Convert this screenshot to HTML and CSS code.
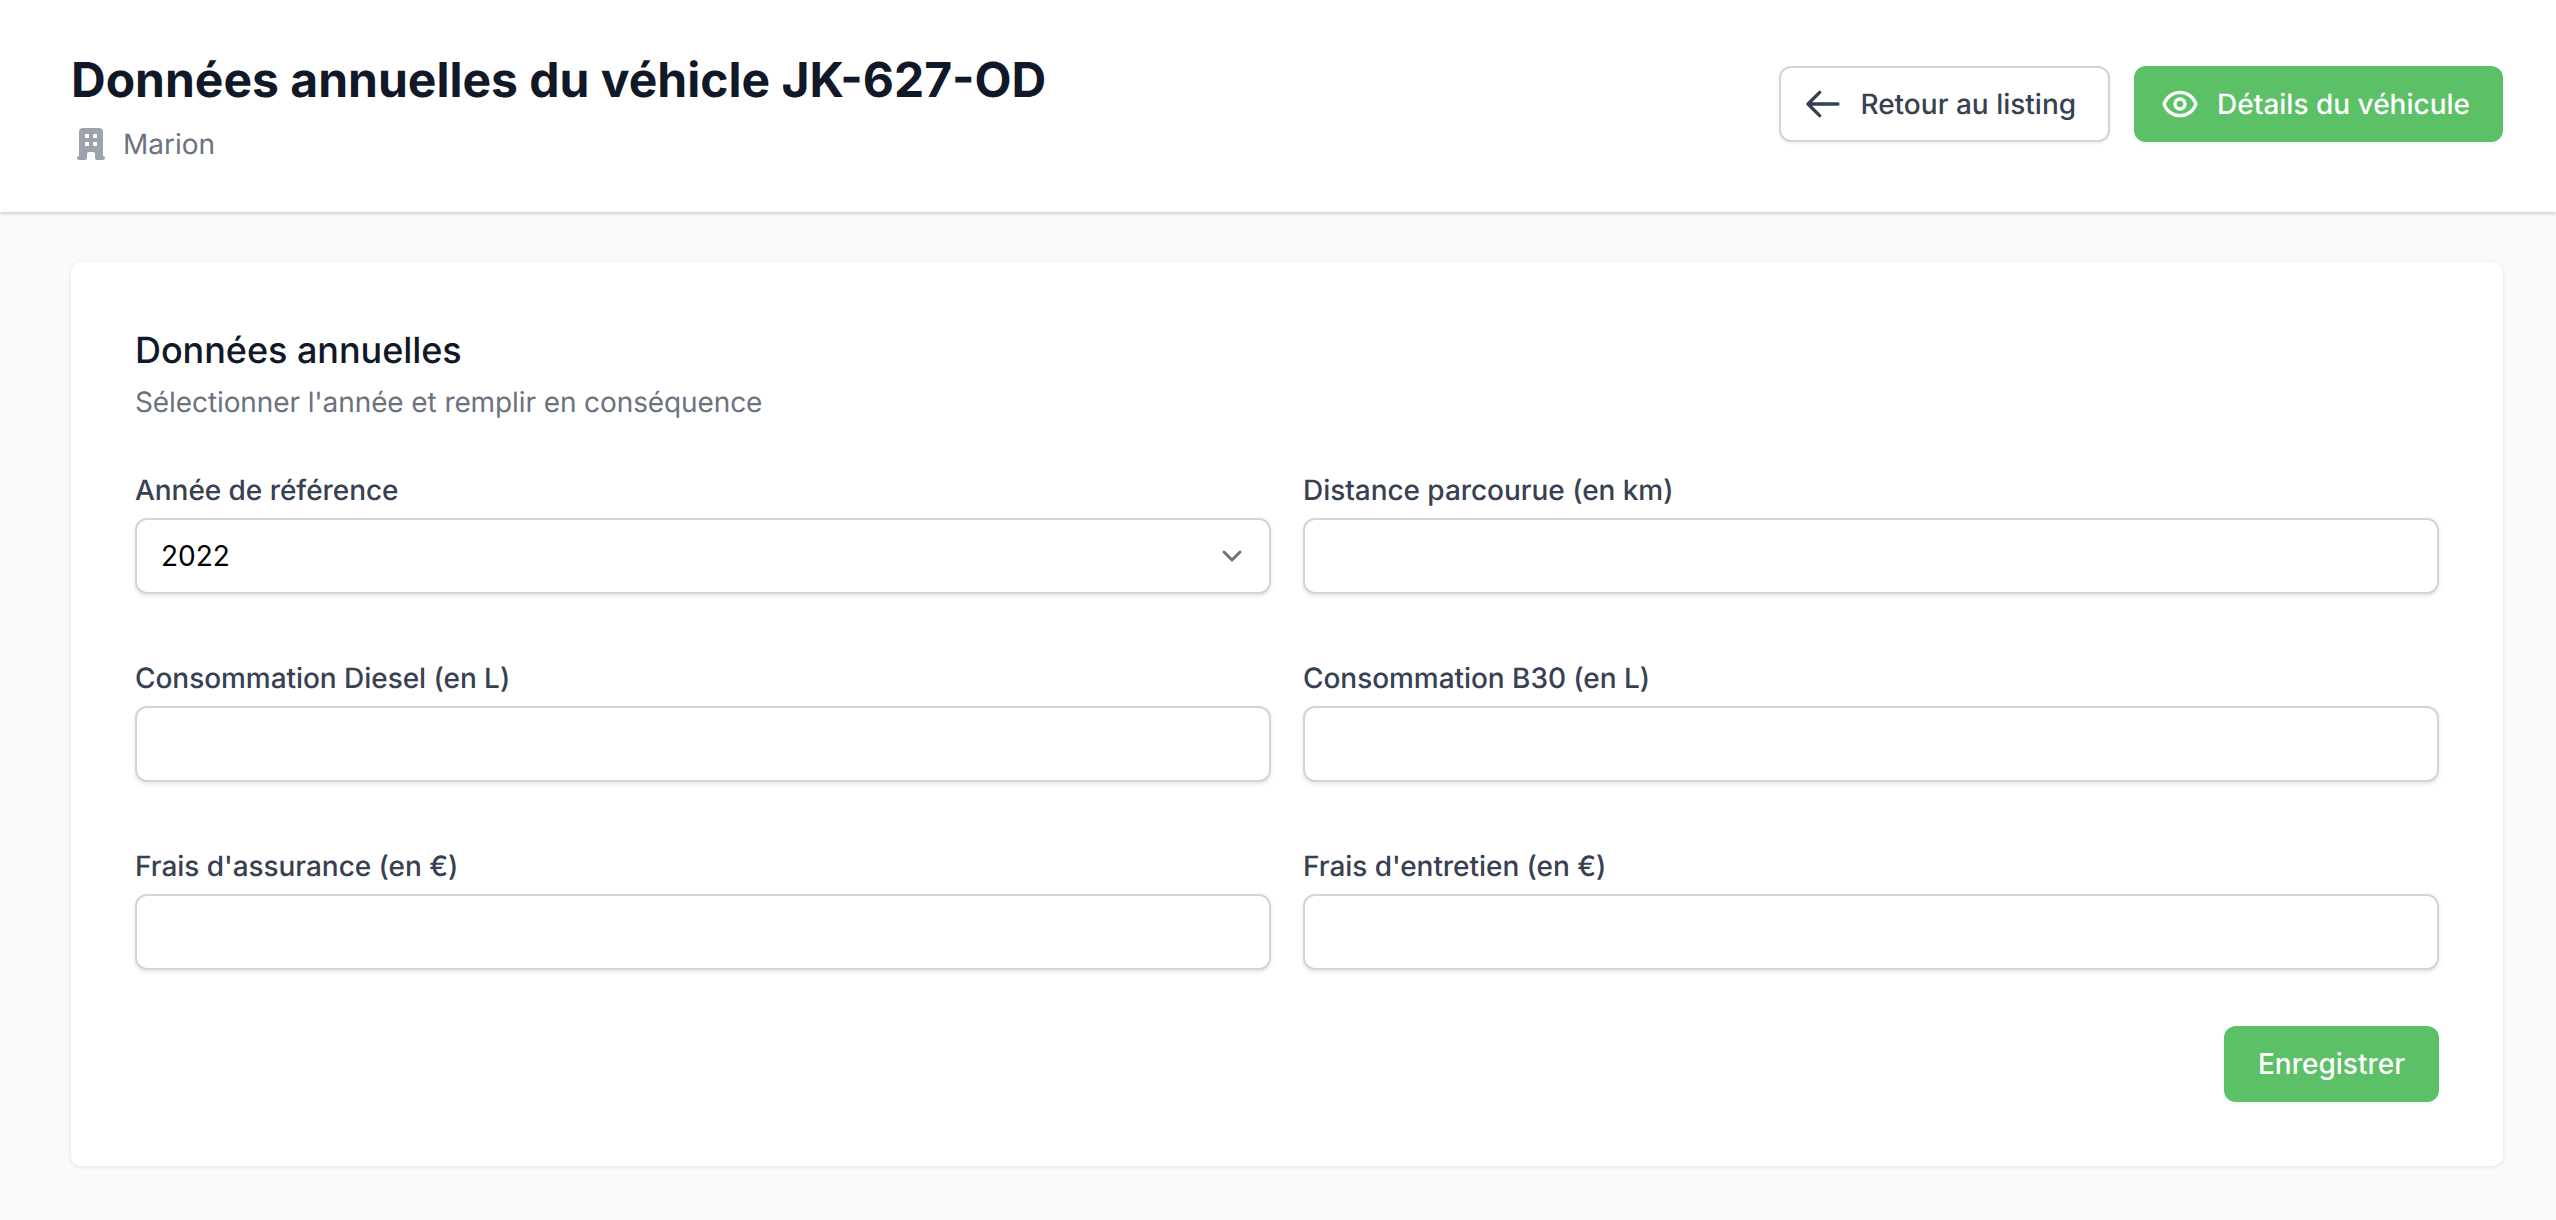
FILE: index.html
```html
<!DOCTYPE html>
<html lang="fr">
<head>
<meta charset="utf-8">
<title>Données annuelles du véhicle JK-627-OD</title>
<link rel="stylesheet" href="styles.css">
</head>
<body>
<header class="topbar">
  <div class="heading">
    <h1 class="title">Données annuelles du véhicle JK-627-OD</h1>
    <div class="meta">
      <svg class="meta-icon" viewBox="0 0 20 20" fill="currentColor"><path fill-rule="evenodd" clip-rule="evenodd" d="M4 4a2 2 0 012-2h8a2 2 0 012 2v12a1 1 0 110 2h-3a1 1 0 01-1-1v-2a1 1 0 00-1-1H9a1 1 0 00-1 1v2a1 1 0 01-1 1H4a1 1 0 110-2V4zm3 1h2v2H7V5zm2 4H7v2h2V9zm2-4h2v2h-2V5zm2 4h-2v2h2V9z"/></svg>
      <span>Marion</span>
    </div>
  </div>
  <div class="actions">
    <a class="btn btn-white" href="#">
      <svg class="btn-icon" viewBox="0 0 24 24" fill="none" stroke="currentColor" stroke-width="2" stroke-linecap="round" stroke-linejoin="round"><path d="M10 19l-7-7m0 0l7-7m-7 7h18"/></svg>
      Retour au listing
    </a>
    <a class="btn btn-green" href="#">
      <svg class="btn-icon" viewBox="0 0 24 24" fill="none" stroke="currentColor" stroke-width="2" stroke-linecap="round" stroke-linejoin="round"><path d="M15 12a3 3 0 11-6 0 3 3 0 016 0z"/><path d="M2.458 12C3.732 7.943 7.523 5 12 5c4.478 0 8.268 2.943 9.542 7-1.274 4.057-5.064 7-9.542 7-4.477 0-8.268-2.943-9.542-7z"/></svg>
      Détails du véhicule
    </a>
  </div>
</header>
<main class="content">
  <form class="card">
    <h2 class="card-title">Données annuelles</h2>
    <p class="card-sub">Sélectionner l'année et remplir en conséquence</p>
    <div class="fields">
      <div class="field">
        <label class="label" for="annee">Année de référence</label>
        <div class="select-wrap">
          <select class="control select" id="annee"><option>2022</option></select>
          <svg class="chevron" viewBox="0 0 20 20" fill="none" stroke="currentColor" stroke-width="1.5" stroke-linecap="round" stroke-linejoin="round"><path d="M6 8l4 4 4-4"/></svg>
        </div>
      </div>
      <div class="field">
        <label class="label" for="distance">Distance parcourue (en km)</label>
        <input class="control" id="distance" type="text">
      </div>
      <div class="field">
        <label class="label" for="diesel">Consommation Diesel (en L)</label>
        <input class="control" id="diesel" type="text">
      </div>
      <div class="field">
        <label class="label" for="b30">Consommation B30 (en L)</label>
        <input class="control" id="b30" type="text">
      </div>
      <div class="field">
        <label class="label" for="assurance">Frais d'assurance (en €)</label>
        <input class="control" id="assurance" type="text">
      </div>
      <div class="field">
        <label class="label" for="entretien">Frais d'entretien (en €)</label>
        <input class="control" id="entretien" type="text">
      </div>
    </div>
    <div class="form-actions">
      <button class="btn btn-green btn-save" type="button">Enregistrer</button>
    </div>
  </form>
</main>
</body>
</html>
```

FILE: styles.css
```css
* { box-sizing: border-box; }
html, body { margin: 0; padding: 0; }
body {
  height: 1220px;
  overflow: hidden;
  background: #f9fafb;
  font-family: Inter, "Liberation Sans", sans-serif;
  color: #111827;
  text-rendering: geometricPrecision;
}
.topbar {
  height: 212px;
  padding: 0 53px 4px 71px;
  background: #fff;
  display: flex;
  align-items: center;
  justify-content: space-between;
  box-shadow: 0 2px 3px rgba(0, 0, 0, 0.16);
  position: relative;
}
.heading { margin-top: 6px; }
.title {
  margin: 0;
  font-size: 48px;
  line-height: 60px;
  font-weight: 700;
  color: #111827;
}
.meta {
  margin-top: 14px;
  display: flex;
  align-items: center;
  gap: 12px;
  font-size: 28px;
  line-height: 40px;
  color: #6b7280;
}
.meta-icon { width: 40px; height: 40px; color: #9ca3af; }
.actions { display: flex; gap: 24px; }
.btn {
  height: 76px;
  display: inline-flex;
  align-items: center;
  gap: 17px;
  border-radius: 12px;
  font-family: inherit;
  font-size: 28px;
  font-weight: 500;
  text-decoration: none;
  box-shadow: 0 2px 3px rgba(0, 0, 0, 0.06);
}
.btn-white {
  padding: 0 32px 0 22px;
  background: #fff;
  border: 2px solid #d1d5db;
  color: #374151;
}
.btn-green {
  padding: 0 33px 0 26px;
  background: #5cc066;
  border: 0;
  color: #fff;
}
.btn-icon { width: 40px; height: 40px; flex: none; }
.content { padding: 50px 53px 0 71px; }
.card {
  padding: 64px;
  background: #fff;
  border-radius: 10px;
  box-shadow: 0 1px 4px rgba(0, 0, 0, 0.1);
}
.card-title {
  margin: 0;
  font-size: 36px;
  line-height: 48px;
  font-weight: 500;
  letter-spacing: -0.05px;
  color: #111827;
}
.card-sub {
  margin: 8px 0 0;
  font-size: 28px;
  line-height: 40px;
  letter-spacing: -0.1px;
  color: #6b7280;
}
.fields {
  margin-top: 48px;
  display: grid;
  grid-template-columns: 1fr 1fr;
  column-gap: 32px;
  row-gap: 64px;
}
.label {
  display: block;
  font-size: 28px;
  font-weight: 500;
  line-height: 40px;
  letter-spacing: -0.05px;
  color: #374151;
  margin-bottom: 8px;
}
.control {
  display: block;
  width: 100%;
  height: 76px;
  padding: 0 24px;
  background: #fff;
  border: 2px solid #d1d5db;
  border-radius: 12px;
  box-shadow: 0 2px 4px rgba(0, 0, 0, 0.1);
  font-family: inherit;
  font-size: 28px;
  color: #000;
  outline: none;
}
.select { appearance: none; -webkit-appearance: none; }
.select-wrap { position: relative; }
.chevron {
  position: absolute;
  right: 19px;
  top: 18px;
  width: 40px;
  height: 40px;
  color: #6b7280;
  pointer-events: none;
}
.form-actions { margin-top: 56px; display: flex; justify-content: flex-end; }
.btn-save { padding: 0 34px; }
```
